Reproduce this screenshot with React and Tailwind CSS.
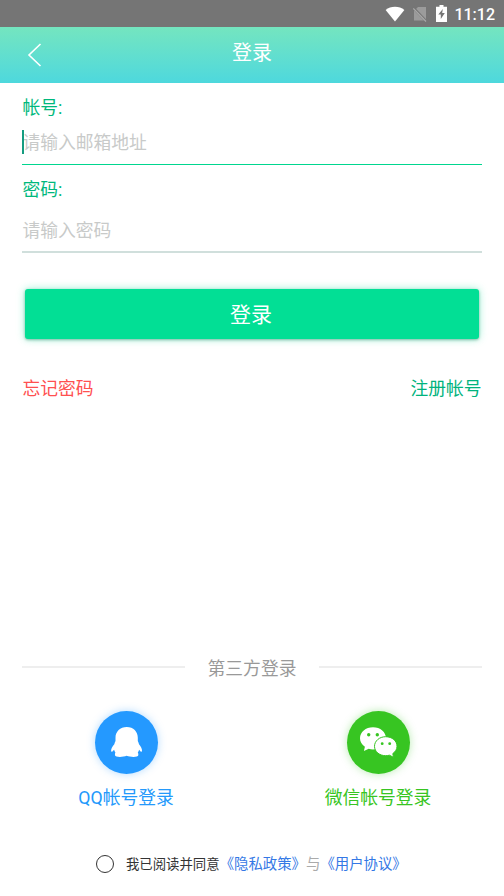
import React, { useState } from 'react';

function StatusBar() {
  return (
    <div className="flex h-[27px] items-center justify-end bg-[#757575] pr-[9px] text-white">
      <svg className="mr-[8px] h-4 w-[20px]" viewBox="0 0 20 16" fill="currentColor">
        <path d="M.6 4C3.200 1.900 6.400.800 10 .8s6.800 1.100 9.400 3.200L10 15.600z" />
      </svg>
      <svg className="mr-[9px] h-4 w-[14px]" viewBox="0 0 14 16">
        <path d="M5 1h8v13.500H1V5z" fill="#9b9b9b" />
        <path d="M0 1.500l13.500 14" stroke="#757575" strokeWidth="2.600" />
        <path d="M.3 2.500l12.700 13" stroke="#aaa" strokeWidth="1.200" />
      </svg>
      <svg className="mr-[7px] h-[17px] w-[11px]" viewBox="0 0 11 17">
        <path d="M3.500 0h4v1.700H11V17H0V1.700h3.500z" fill="currentColor" />
        <path d="M6.800 4L2.300 9.600h2.500v4.400l4-6H6.200z" fill="#757575" />
      </svg>
      <span className="pt-[2px] font-[Roboto] text-[16px] font-medium leading-none">11:12</span>
    </div>
  );
}

function Field({ label, type, placeholder, active }) {
  return (
    <label className="block">
      <span className="block h-6 leading-[26px] text-[#00b87c]">{label}</span>
      <span
        className={`relative block border-b ${active ? 'h-[46px] border-[#00d68f] pt-3' : 'h-[52px] border-b-2 border-[#d0dfdc] pt-[18px]'}`}
      >
        {active && <i className="absolute top-[11px] left-0 h-6 w-[2px] bg-[#159c80]" />}
        <input
          type={type}
          placeholder={placeholder}
          className="block h-6 w-full bg-transparent leading-6 outline-none placeholder:text-[#c8cac9]"
        />
      </span>
    </label>
  );
}

function QQIcon() {
  return (
    <svg className="h-[63px] w-[63px]" viewBox="0 0 63 63" fill="#fff">
      <path d="M31.800 16c-6.700 0-11.300 4.700-11.300 10.700v3.400c-.5 1.200-.9 2-1.200 3.200-2 2.300-3.400 4.800-3.200 6.700.2 1.500 1.500.5 3-1.300.3 1 .7 1.900 1.300 2.700-.5.700-.6 1.700-.4 2.900.3 2.200 8 2 11.700.5 3.700 1.500 11.300 1.700 11.600-.5.200-1.200 0-2.200-.5-2.900.6-.8 1-1.700 1.300-2.700 1.400 1.800 2.600 2.800 2.900 1.300.3-1.900-1.100-4.400-3-6.700-.3-1.200-.7-2-1.200-3.200v-3.400C42.800 20.700 38.400 16 31.800 16z" />
    </svg>
  );
}

function WechatIcon() {
  return (
    <svg className="h-[63px] w-[63px]" viewBox="0 0 63 63">
      <path
        d="M26 16.300c-7.300 0-13 4.800-13 11 0 3.500 1.900 6.400 4.900 8.500l-1 4.300 4.800-2.300c1.400.4 2.800.6 4.300.6 7.300 0 13-4.900 13-11.100s-5.700-11-13-11z"
        fill="#fff"
      />
      <path
        d="M38.700 25.700c6.400 0 11.300 4.200 11.300 9.600 0 3-1.600 5.500-4.200 7.300l.7 3.700-4.100-2.100c-1.200.3-2.400.5-3.700.5-6.300 0-11.200-4.100-11.200-9.400s4.900-9.600 11.200-9.600z"
        fill="#fff"
        stroke="#37c522"
        strokeWidth="1"
      />
      <g fill="#37c522">
        <circle cx="21.700" cy="23.800" r="1.700" />
        <circle cx="30.300" cy="23.800" r="1.700" />
        <circle cx="35.200" cy="32.700" r="1.400" />
        <circle cx="42.700" cy="32.700" r="1.400" />
      </g>
    </svg>
  );
}

export default function App() {
  const [agreed, setAgreed] = useState(false);

  return (
    <div className="flex h-[896px] w-[504px] flex-col overflow-hidden bg-white font-[Roboto,'Noto_Sans_CJK_SC',sans-serif] text-[17.800px]">
      <StatusBar />
      <header className="grid h-14 grid-cols-[1fr_auto_1fr] bg-linear-to-b from-[#74e5bf] to-[#4dd8dd] text-white">
        <button aria-label="返回" className="flex items-center pl-[27px]">
          <svg className="h-6 w-[15px]" viewBox="0 0 15 24" fill="none" stroke="currentColor" strokeWidth="1.600">
            <path d="M13.500 1L2 12l11.500 11" />
          </svg>
        </button>
        <h1 className="text-[20px] leading-[52px]">登录</h1>
      </header>

      <main className="flex flex-1 flex-col px-[22.400px] pt-3">
        <Field label="帐号:" type="text" placeholder="请输入邮箱地址" active />
        <div className="h-3" />
        <Field label="密码:" type="password" placeholder="请输入密码" />

        <button className="mx-[2.600px] mt-[36px] h-[50px] shrink-0 rounded-[3px] bg-[#02df95] pr-[2px] text-[21px] leading-[52px] text-white shadow-[0_1px_3px_rgba(0,100,65,0.400),0_0_8px_rgba(2,223,149,0.400)]">
          登录
        </button>

        <div className="mt-[37px] flex justify-between leading-[26px]">
          <a className="text-[#ff5050]">忘记密码</a>
          <a className="text-[#00b37d]">注册帐号</a>
        </div>

        <div className="mt-auto flex items-center gap-[22.500px] leading-6 text-[#999]">
          <div className="-mt-[3px] h-[2px] flex-1 bg-[#eee]" />
          <span className="pt-px">第三方登录</span>
          <div className="-mt-[3px] h-[2px] flex-1 bg-[#eee]" />
        </div>

        <div className="-mx-[22.400px] mt-[30px] grid grid-cols-2 leading-6">
          <a className="flex flex-col items-center gap-[12px] text-[#2499fb]">
            <span className="rounded-full bg-[#2499ff] shadow-[0_0_9px_rgba(36,153,255,0.350)]">
              <QQIcon />
            </span>
            QQ帐号登录
          </a>
          <a className="flex flex-col items-center gap-[12px] text-[#37c522]">
            <span className="rounded-full bg-[#37c522] shadow-[0_0_9px_rgba(55,197,34,0.350)]">
              <WechatIcon />
            </span>
            微信帐号登录
          </a>
        </div>

        <div className="mt-[42px] mb-[20px] flex h-6 items-center pl-[73.500px] text-[14.400px] whitespace-nowrap">
          <button
            aria-label="同意协议"
            onClick={() => setAgreed(!agreed)}
            className={`mr-[12px] h-[18px] w-[18px] shrink-0 rounded-full border-[1.500px] border-[#333] ${agreed ? 'bg-[#02df95]' : ''}`}
          />
          <span className="pt-[2px] text-[13.400px] text-[#333]">我已阅读并同意</span>
          <a className="pt-px text-[#3478e5]">《隐私政策》</a>
          <span className="pt-px text-[#aaa]">与</span>
          <a className="pt-px text-[#3478e5]">《用户协议》</a>
        </div>
      </main>
    </div>
  );
}
